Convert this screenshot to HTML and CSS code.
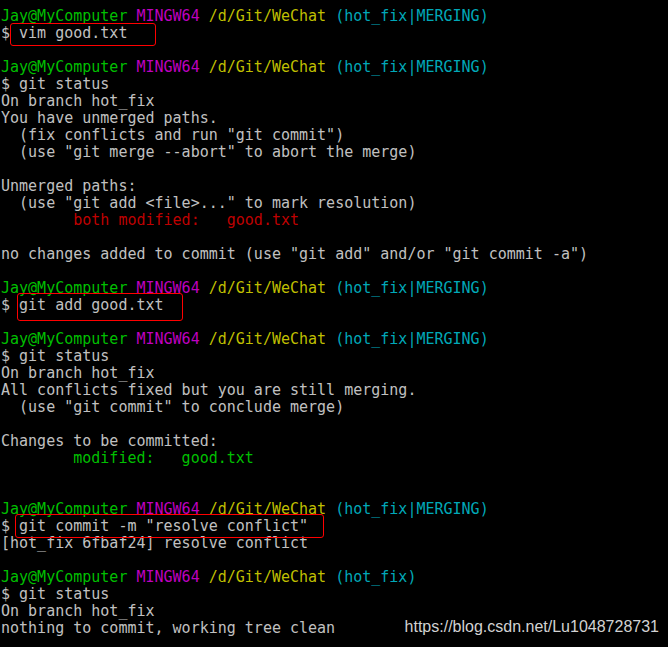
FILE: index.html
```html
<!DOCTYPE html>
<html>
<head>
<meta charset="utf-8">
<link rel="stylesheet" href="styles.css">
</head>
<body>
<div class="term">
<pre class="out"><span class="g">Jay@MyComputer</span> <span class="m">MINGW64</span> <span class="y">/d/Git/WeChat</span> <span class="c">(hot_fix|MERGING)</span>
$ vim good.txt

<span class="g">Jay@MyComputer</span> <span class="m">MINGW64</span> <span class="y">/d/Git/WeChat</span> <span class="c">(hot_fix|MERGING)</span>
$ git status
On branch hot_fix
You have unmerged paths.
  (fix conflicts and run "git commit")
  (use "git merge --abort" to abort the merge)

Unmerged paths:
  (use "git add &lt;file&gt;..." to mark resolution)
<span class="r">        both modified:   good.txt</span>

no changes added to commit (use "git add" and/or "git commit -a")

<span class="g">Jay@MyComputer</span> <span class="m">MINGW64</span> <span class="y">/d/Git/WeChat</span> <span class="c">(hot_fix|MERGING)</span>
$ git add good.txt

<span class="g">Jay@MyComputer</span> <span class="m">MINGW64</span> <span class="y">/d/Git/WeChat</span> <span class="c">(hot_fix|MERGING)</span>
$ git status
On branch hot_fix
All conflicts fixed but you are still merging.
  (use "git commit" to conclude merge)

Changes to be committed:
<span class="g">        modified:   good.txt</span>


<span class="g">Jay@MyComputer</span> <span class="m">MINGW64</span> <span class="y">/d/Git/WeChat</span> <span class="c">(hot_fix|MERGING)</span>
$ git commit -m "resolve conflict"
[hot_fix 6fbaf24] resolve conflict

<span class="g">Jay@MyComputer</span> <span class="m">MINGW64</span> <span class="y">/d/Git/WeChat</span> <span class="c">(hot_fix)</span>
$ git status
On branch hot_fix
nothing to commit, working tree clean</pre>
<div class="mark mark-1"></div>
<div class="mark mark-2"></div>
<div class="mark mark-3"></div>
<div class="watermark">https://blog.csdn.net/Lu1048728731</div>
</div>
</body>
</html>
```
FILE: styles.css
```css
html, body {
  margin: 0;
  padding: 0;
  background: #000;
}
.term {
  position: relative;
  width: 668px;
  height: 647px;
  overflow: hidden;
  background: #000;
}
.out {
  margin: 0;
  padding: 8px 0 0 1px;
  font-family: "DejaVu Sans Mono", "Liberation Mono", monospace;
  font-size: 15px;
  line-height: 17px;
  color: #c0c0c0;
  white-space: pre;
}
.g { color: #00bf00; }
.m { color: #bf00bf; }
.y { color: #bfbf00; }
.c { color: #00a8b8; }
.r { color: #bf0000; }
.mark {
  position: absolute;
  border: 1px solid #ff0000;
  border-radius: 3px;
  box-sizing: border-box;
}
.mark-1 { left: 10px; top: 23px; width: 146px; height: 23px; }
.mark-2 { left: 17px; top: 293px; width: 166px; height: 28px; }
.mark-3 { left: 15px; top: 514px; width: 309px; height: 24px; }
.watermark {
  position: absolute;
  right: 9px;
  top: 617px;
  font-family: "Liberation Sans", Arial, sans-serif;
  font-size: 16px;
  line-height: 20px;
  color: #d2d2d2;
}
```
